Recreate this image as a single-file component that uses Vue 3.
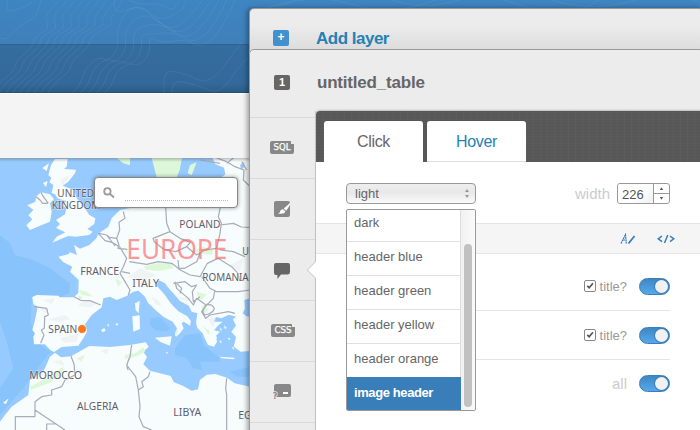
<script setup>
const tools = ['sql', 'brush', 'infowindow', 'css', 'legend']
const options = ['dark', 'header blue', 'header green', 'header yellow', 'header orange', 'image header']
const places = [
  { t: 'UNITED', x: 172, y: 126, w: 110 },
  { t: 'KINGDOM', x: 155, y: 162, w: 146 },
  { t: 'FRANCE', x: 241, y: 360, w: 116 },
  { t: 'POLAND', x: 538, y: 219, w: 123 },
  { t: 'ITALY', x: 397, y: 396, w: 80 },
  { t: 'ROMANIA', x: 607, y: 378, w: 139 },
  { t: 'U', x: 727, y: 300, w: 20 },
  { t: 'SPAIN', x: 145, y: 534, w: 87 },
  { t: 'MOROCCO', x: 88, y: 671, w: 158 },
  { t: 'ALGERIA', x: 231, y: 765, w: 124 },
  { t: 'LIBYA', x: 520, y: 783, w: 84 },
  { t: 'EG', x: 715, y: 792, w: 40 }
]
const contours = [
  ...Array.from({ length: 9 }, (_, i) => {
    const o = i * 7
    return `M${o - 8} 93C${o} 78 ${o + 12} 77 ${o + 15} 66S${o + 32} 51 ${o + 34} 41S${o + 51 + i} ${34 - i} ${o + 47 + i} 22S${o + 57 + i} 8 ${o + 59 + i} -2`
  }),
  ...Array.from({ length: 5 }, (_, i) => {
    const o = i * 8
    return `M${72 + o} 93C${84 + o} 84 ${80 + o} 74 ${91 + o} ${63 + i}S${106 + o} ${66 + i} ${114 + o} ${54 + i}S${112 + o} 34 ${124 + o} ${16 + i * 6}S${147 + o} ${12 + i * 6} ${160 + o} ${23 + i * 5}S${186 + o} ${24 + i * 4} ${204 + o} -2`
  }),
  'M7 -2V11Q20 12 38 -2', 'M-2 36Q5 43 12 34T29 21T41 -2',
  'M116 -2Q110 16 126 10T150 13T172 16T186 -2',
  'M125 -2Q136 5 149 4T168 8T180 -2',
  'M164 93V78Q166 69 177 72T199 80T224 66T242 42',
  'M172 93Q171 79 184 82T209 90T232 77T250 58',
  'M255 12Q310 -9 350 4T430 2T520 5T600 -1T704 4',
  'M250 5Q280 10 300 -2M390 -1Q420 11 451 2T490 -2M550 -1Q590 14 640 -1'
]
</script>

<template>
  <div class="app">
    <main class="page">
      <header class="top">
        <div class="nav"></div>
        <div class="subnav"></div>
        <svg class="contours" viewBox="0 0 700 93"><path v-for="(d, i) in contours" :key="i" :d="d" /></svg>
      </header>
      <div class="strip"></div>
      <section class="map">
        <svg class="world" viewBox="0 9 750 816">
          <g class="deep">
            <path d="M0 240L30 265L45 300L100 315L150 340L210 385L208 415L175 430L95 425L92 500L110 560L150 590L70 700L0 780V700L40 640L20 560L0 500Z" />
            <path d="M450 490L480 487L510 520L500 530L465 525L450 510ZM525 580L555 540L600 535L610 570L655 605L660 620L600 620L607 645L580 640L560 610L525 600ZM690 650L750 635V665L710 665Z" />
          </g>
          <g class="land">
            <path d="M165 12H203L200 35L192 42L228 44L225 55L205 80L188 92L222 105L230 130L258 165L268 180L286 190L283 207L262 222L278 230L268 240L228 245L205 243L188 250L157 263L170 245L196 232L168 219L180 207L168 195L195 178L199 160L185 150L200 139L172 130L165 118L155 114L160 90L148 82L154 68L145 60L153 30Z" />
            <path d="M123 112L150 118L162 132L150 145L155 170L150 200L120 212L90 225L79 211L97 193L85 181L100 165L82 151L106 140L108 125ZM127 39L147 25L140 48ZM129 84L143 78L138 97Z" />
            <path d="M175 305L205 298L210 292L231 300L222 269L240 281L268 270L289 250L297 235L325 215L335 190L360 165L400 157L430 105L455 140L550 130L600 68L665 67L676 58L672 38L645 27L638 9H750V430L733 435L735 460L728 475L739 484L750 485V588L722 590L701 575L708 546L694 530L708 512L699 493L708 485L687 479L664 490L648 486L640 500L668 500L653 513L642 526L660 530L648 542L651 560L642 575L624 570L615 552L608 535L592 519L588 504L592 475L575 470L566 452L540 438L520 415L508 402L495 385L475 375L470 392L493 418L512 445L534 468L562 484L573 499L570 512L551 500L545 505L551 520L540 535L528 545L525 539L531 520L518 500L490 485L466 465L445 445L434 424L415 407L400 410L380 423L350 435L330 425L310 430L305 457L275 480L255 508L261 530L250 550L235 572L185 576L162 591L150 584L135 568L102 568L100 545L105 535L97 525L104 500L113 455L100 448L97 426L110 420L175 422L180 427L222 427L235 413L236 375L210 350L217 335L190 322Z" />
            <path d="M0 825V800L15 780L35 755L85 720L90 675L130 650L150 605L165 593L183 607L213 604L237 590L268 573L330 576L390 570L437 562L446 575L430 590L441 606L430 628L450 647L512 663L522 682L550 693L575 707L594 703L600 674L621 659L646 657L681 668L704 685L750 695V825Z" />
            <path d="M465 548L515 544L510 572L480 560ZM397 484L419 481L420 522L400 530ZM405 445L419 438L416 475L407 466ZM660 605L705 608L700 613L664 610ZM303 525L313 519L317 527L308 532ZM321 510L327 507L326 515ZM345 507L355 505L352 512ZM498 590L504 592L500 597ZM658 517L665 522L664 530ZM672 511L680 518L675 523ZM683 548L691 550L688 556ZM658 560L663 556L665 565ZM695 575L702 578L700 585ZM640 535L652 548L645 550ZM9 743L20 735L26 730L18 748Z" />
          </g>
          <g class="green">
            <path d="M350 9H390V31L370 25ZM455 9H546L539 45L530 67H470ZM570 30L590 22L575 61L563 55ZM430 335L470 325L515 325L520 340L480 348L440 345ZM575 290L610 275L640 285L635 300ZM235 404L260 410L280 425L245 420ZM235 420L250 429L235 434ZM90 695L145 665L190 635L190 650L150 683L93 705ZM230 610L255 600L245 620ZM375 600L405 595L430 577L435 590L410 604L375 612ZM590 410L620 418L605 435L595 428ZM608 510L630 530L625 540ZM525 530L535 525L530 542ZM345 370L365 382L355 396ZM605 455L615 448L625 465L610 478Z" />
          </g>
          <g class="relief">
            <path d="M130 435L165 430L155 447ZM120 465L145 458L140 475ZM145 493L195 480L210 493L175 501ZM180 550L235 535L230 560L190 563ZM235 452L250 435L290 445L270 457ZM455 425L467 450L484 451L475 435ZM623 490L647 490L640 520ZM381 365L420 340L470 360L430 376ZM300 588L330 578L320 598ZM155 620L185 615L195 633ZM180 75L210 60L188 92ZM690 330L730 310L720 350ZM530 425L560 440L575 430Z" />
          </g>
          <g class="water">
            <path d="M720 30L733 20V36L723 44ZM596 20L613 10L620 45L600 62Z" />
          </g>
          <g class="border">
            <path d="M297 235L320 240L328 247L350 250L357 270L354 280L382 283M295 235L315 257L336 262L360 277L380 310L370 335L360 355L375 380L390 405L385 420M370 170L375 190L357 202L359 225L350 250M497 157L500 205L510 230L540 250L571 262L560 275L527 290L490 282L463 260L459 250L510 230M661 157L655 185L664 205L660 235L650 280L615 285L590 300L560 275M660 210L700 205L724 216L750 217M660 285L700 290L735 305M388 320L440 328L475 320L515 325L535 340L554 340L590 320L600 295M534 315L537 343L570 360L600 365L622 325L654 310L695 335L714 355L719 378M605 365L630 400L650 410L715 410L750 405M520 385L555 380L575 395L590 390L577 410L580 440L600 425M525 380L530 400L565 430L580 450L590 430L618 450L605 470L617 490L630 480L685 470L705 475M645 405L640 430L620 450Q600 470 615 480Q640 475 643 460Q635 445 620 450M650 9L680 20L705 35L732 45L730 75L750 95M600 15L660 25M680 25L705 5M222 425L242 436L270 437L302 450M103 455L140 460L145 480L134 485L133 520L124 525L132 540L122 565M213 604L222 627L225 660L195 675L185 695L155 705L155 720L125 725L105 740V765L195 825M105 785H46V825M105 785V740M140 825V807H167M395 570L390 605L380 630L407 665L415 705L420 755L417 785L430 815L455 825M450 650L445 665L425 680L430 695L415 705M680 670L677 700L680 720V825M108 125L120 135L128 145L143 145M123 112L130 125L145 145M390 605Q375 633 385 645M540 415L545 400L530 385M320 240L345 273M365 350L390 355M725 20L740 45" />
          </g>
          <g class="labels">
            <text v-for="p in places" :key="p.t" :x="p.x" :y="p.y" :textLength="p.w" lengthAdjust="spacingAndGlyphs">{{ p.t }}</text>
          </g>
          <text class="continent" x="379" y="311" textLength="303" lengthAdjust="spacingAndGlyphs">EUROPE</text>
          <circle cx="246" cy="522" r="13" class="marker" />
        </svg>
        <div class="search">
          <svg viewBox="0 0 12 12"><circle cx="4.4" cy="4.4" r="3.2" /><path d="M7 7L11 10.5" /></svg>
          <span class="dots"></span>
        </div>
      </section>
    </main>

    <aside class="layer add">
      <span class="badge plus">+</span>
      <strong>Add layer</strong>
    </aside>

    <aside class="layer current">
      <div class="head"><span class="badge num">1</span><strong>untitled_table</strong></div>
      <div class="body">
        <nav class="tools">
          <div v-for="t in tools" :key="t" class="tool">
            <svg v-if="t === 'sql' || t === 'css'" width="24" height="13" viewBox="0 0 24 13" :class="t">
              <path class="fill" d="M2 0H21V3H24V11Q24 13 22 13H2Q0 13 0 11V2Q0 0 2 0Z" />
              <text x="3.6" y="9.4" textLength="17" lengthAdjust="spacingAndGlyphs">{{ t.toUpperCase() }}</text>
            </svg>
            <svg v-else-if="t === 'brush'" width="16" height="16" viewBox="0 0 16 16">
              <rect class="fill" width="16" height="16" rx="2" />
              <path class="light" d="M16 2L9.7 7.4L12.2 9.7L16 4ZM9 8.2L11.3 10.3Q11 13.5 4 12.6Q6 12 6.2 10Q7 8 9 8.2Z" />
            </svg>
            <svg v-else-if="t === 'infowindow'" class="talk" width="16" height="16" viewBox="0 0 16 16">
              <path d="M2 0H14Q16 0 16 2V9Q16 11 14 11.5H7L3.4 16V12H2Q0 12 0 10V2Q0 0 2 0Z" />
            </svg>
            <svg v-else class="legend" width="20" height="15" viewBox="0 0 20 15">
              <rect class="fill" x="2" width="17" height="13" rx="2" />
              <rect x="11" y="8" width="5" height="2" fill="#fff" />
              <text class="ask" x="0.8" y="14.5">?</text>
            </svg>
            <i v-if="t === 'infowindow'" class="notch"></i>
          </div>
          <div class="tool"></div>
        </nav>
        <section class="content">
          <div class="tabs"><span class="tab active">Click</span><span class="tab">Hover</span></div>
          <div class="settings">
            <div class="select">
              <span>light</span>
              <svg width="6" height="9" viewBox="0 0 6 9"><path d="M3 0L5 3H1ZM1 6H5L3 9Z" /></svg>
              <div class="dropdown">
                <ul><li v-for="o in options" :key="o" :class="{ chosen: o === 'image header' }">{{ o }}</li></ul>
                <div class="track"><i></i></div>
              </div>
            </div>
            <div class="width">
              <span>width</span>
              <div class="spinner"><b>226</b><div class="steps">
                <svg viewBox="0 0 15 10"><path d="M7.5 3.6L9.3 6.6H5.7Z" /></svg>
                <svg viewBox="0 0 15 10"><path d="M5.7 3.4H9.3L7.5 6.4Z" /></svg>
              </div></div>
            </div>
          </div>
          <div class="bar">
            <svg width="16" height="12" viewBox="0 0 16 12">
              <path class="letter" d="M1 10.5L5.5 1.5L6.3 10.5M3 7H6" />
              <path class="pen" d="M8.5 10.5L14.5 3" />
            </svg>
            <svg width="18" height="10" viewBox="0 0 18 10"><path class="code" d="M5 2L1.2 4.8L5 7.6M10.8 1L7.5 9M13 2L16.8 4.8L13 7.6" /></svg>
          </div>
          <div class="rows">
            <div v-for="n in 2" :key="n" class="row">
              <span class="check"><svg viewBox="0 0 12 12"><path d="M2.8 5.8L5 8.2L9.5 2.7" /></svg></span>
              <span class="title">title?</span>
              <span class="switch"></span>
            </div>
            <div class="row last"><span class="all">all</span><span class="switch"></span></div>
          </div>
        </section>
      </div>
    </aside>
  </div>
</template>

<style>
body { background: #fff; }
</style>

<style scoped>
* { box-sizing: border-box; }
svg { display: block; flex: none; }
.app { position: relative; width: 700px; height: 430px; overflow: hidden; font-family: "Liberation Sans", Arial, sans-serif; color: #666; }
.page { display: flex; flex-direction: column; height: 430px; }
.top { position: relative; flex: none; height: 93px; }
.nav { height: 44px; background: linear-gradient(#3f85c2, #3e80b9); }
.subnav { height: 49px; border-top: 1px solid #2e638e; border-bottom: 1px solid #264e70; background: linear-gradient(#356d9f, #33699a 82%, #2c5c87); }
.contours { position: absolute; inset: 0; width: 700px; height: 93px; fill: none; stroke: #8fc0dc; stroke-opacity: .16; stroke-width: .8; }
.strip { flex: none; height: 65px; background: #f4f4f4; border-top: 1px solid #fff; }
.map { position: relative; width: 250px; height: 272px; background: #97cbff; }
.world { width: 250px; height: 272px; }
.map::before { content: ""; position: absolute; inset: 0 0 auto; height: 4px; background: linear-gradient(rgba(80,80,80,.35), transparent); }
.deep { fill: #88c3fc; }
.land { fill: #f7fcfc; }
.green { fill: #ddf8d9; }
.relief { fill: #ebeeee; opacity: .65; }
.water { fill: #97cbff; }
.border { fill: none; stroke: #a9abb9; stroke-width: 3.6; stroke-linejoin: round; }
.labels { fill: #60606c; font: 34px "Noto Sans", sans-serif; stroke: #fff; stroke-width: 3px; stroke-opacity: .6; paint-order: stroke; }
.continent { fill: #ff6a70; fill-opacity: .7; font: 83px "Noto Sans", sans-serif; }
.marker { fill: #ff7518; stroke: #fff; stroke-width: 2; stroke-opacity: .7; }
.search { position: absolute; left: 94px; top: 19px; width: 144px; height: 31px; padding: 9px 10px 7px 8px; display: flex; background: #fff; border: 1px solid #888; border-radius: 4px; box-shadow: 0 0 4px rgba(0,0,0,.4); }
.search svg { width: 12px; height: 12px; fill: none; stroke: #999; stroke-width: 1.8; }
.dots { flex: 1; margin-left: 10px; margin-right: -1px; height: 14px; border-bottom: 1px dotted #bbb; }
.layer { position: absolute; left: 249px; width: 455px; border: 1px solid #999; border-radius: 5px; background: #ececec; }
.layer strong { font-size: 17px; line-height: 20px; letter-spacing: -.2px; }
.add { top: 8px; height: 430px; padding: 20px 0 0 23px; display: flex; align-items: flex-start; gap: 27px; background: linear-gradient(#ececec 0, #ececec 16px, #dcdcdc 42px); box-shadow: -2px 0 5px rgba(0,0,0,.35); }
.layer.add strong { color: #2581b4; letter-spacing: -.5px; }
.current { top: 49px; height: 390px; }
.head { height: 61px; padding: 23px 0 0 24px; display: flex; align-items: flex-start; gap: 27px; }
.badge { width: 16px; height: 16px; border-radius: 2px; color: #fff; font-weight: bold; text-align: center; }
.plus { margin-top: 1px; background: #4390ce; font-size: 12px; line-height: 15px; }
.num { margin-top: 2px; height: 15px; background: #666; font-size: 11px; line-height: 15px; }
.body { display: flex; }
.tools { flex: none; width: 66px; padding-top: 6px; border-right: 1px solid #ccc; }
.tool { position: relative; height: 61px; padding: 0 1px 1px 0; display: flex; align-items: center; justify-content: center; border-top: 1px solid #d9d9d9; }
.fill { fill: #888; }
.light { fill: #fff; }
.tool text { fill: #fff; font: 8px "DejaVu Sans", sans-serif; stroke: #fff; stroke-width: .25px; }
.tool text.ask { fill: #888; font-weight: bold; stroke: #ececec; stroke-width: 1.5px; paint-order: stroke; }
.css { margin-left: 2px; }
.sql { margin-right: 1px; }
.talk { fill: #666; margin-top: 2px; }
.notch { position: absolute; right: -6px; top: 24px; width: 12px; height: 12px; transform: rotate(45deg); background: #fff; border-left: 1px solid #ccc; border-bottom: 1px solid #ccc; }
.content { flex: 1; height: 330px; background: #fff; border-top-left-radius: 4px; box-shadow: 0 -1px 2px rgba(0,0,0,.2); }
.tabs { height: 51px; padding: 10px 8px 0; display: flex; gap: 4px; border-top-left-radius: 4px; background: repeating-linear-gradient(90deg, rgba(255,255,255,.025) 0 1px, transparent 1px 7px), repeating-linear-gradient(rgba(0,0,0,.035) 0 1px, transparent 1px 3px), #595959; }
.tab { width: 99px; height: 41px; border-radius: 3px 3px 0 0; background: #fff; border-bottom: 1px solid #ddd; color: #2581b4; text-align: center; font-size: 16px; line-height: 42px; letter-spacing: -.3px; }
.tab.active { border-color: #fff; color: #666; }
.settings { height: 61px; padding: 21px 33px 0 30px; display: flex; justify-content: space-between; }
.select { position: relative; width: 130px; height: 21px; padding: 0 5px 0 8px; display: flex; align-items: center; justify-content: space-between; border: 1px solid #999; border-radius: 4px; background: linear-gradient(#eee, #e8e8e8 45%, #fafafa); font-size: 13px; }
.select > svg { fill: #999; }
.dropdown { position: absolute; z-index: 2; left: -1px; top: 25px; width: 130px; height: 202px; display: flex; overflow: hidden; border: 1px solid #999; border-radius: 2px; background: #fff; }
ul { flex: none; width: 114px; margin: -2px 0 0; padding: 0; border-right: 1px solid #ddd; list-style: none; }
li { height: 34px; padding-left: 7px; border-bottom: 1px solid #e0e0e0; line-height: 30px; }
li.chosen { margin: -1px -1px 0 0; background: #397db9; border-color: #397db9; color: #fff; font-weight: bold; line-height: 32px; letter-spacing: -.4px; }
.track { flex: 1; padding: 34px 3px 3px; background: linear-gradient(90deg, #f1f1f1, #fafafa); }
.track i { display: block; width: 8px; height: 163px; border-radius: 4px; background: #c1c1c1; }
.width { height: 21px; display: flex; align-items: center; gap: 7px; color: #ccc; font-size: 15px; }
.spinner { display: flex; width: 53px; height: 21px; border: 1px solid #999; border-radius: 3px; color: #555; }
.spinner b { flex: 1; padding-left: 4px; background: linear-gradient(135deg, #fff 50%, #f1f1f1); border-radius: 3px; font-weight: normal; font-size: 13px; line-height: 21px; }
.steps { width: 16px; border-left: 1px solid #999; }
.steps svg { width: 15px; height: 9px; fill: #555; }
.steps svg:first-child { height: 10px; border-bottom: 1px solid #999; }
.bar { height: 31px; padding: 1px 28px 0 0; display: flex; align-items: center; justify-content: flex-end; gap: 21px; border: solid #e5e5e5; border-width: 1px 0; background: #f5f5f5; }
.bar path { fill: none; stroke: #397db9; stroke-width: 1.5; }
.bar .letter { stroke-width: 1.2; stroke-dasharray: 2 .5; }
.bar .pen { stroke-width: 1.8; }
.rows { padding: 8px 33px 0 30px; }
.row { height: 49px; display: flex; align-items: center; justify-content: flex-end; border-bottom: 1px solid #e5e5e5; font-size: 13px; }
.row.last { height: 47px; border: 0; }
.check { width: 12px; height: 12px; border: 1px solid #888; border-radius: 2px; }
.check svg { width: 10px; height: 10px; fill: none; stroke: #555; stroke-width: 2; }
.title { margin: 0 12px 0 4px; color: #999; letter-spacing: 0; }
.all { margin-right: 12px; color: #ccc; font-size: 15px; }
.switch { display: flex; justify-content: flex-end; width: 31px; height: 17px; padding: 1px; border: 1px solid #397db9; border-radius: 9px; background: linear-gradient(#3f87c4, #55a9eb); }
.switch::after { content: ""; width: 13px; height: 13px; border-radius: 50%; background: #f1f1f1; box-shadow: 0 0 0 1px #397db9; }
</style>
